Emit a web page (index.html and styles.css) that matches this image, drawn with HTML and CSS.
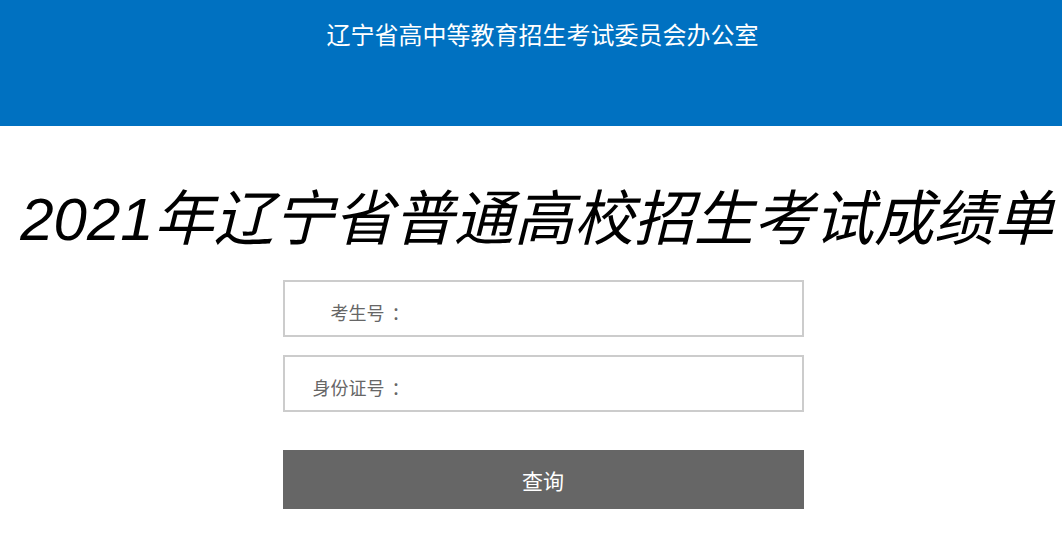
FILE: index.html
```html
<!DOCTYPE html>
<html lang="zh-CN">
<head>
  <meta charset="UTF-8" />
  <title>2021年辽宁省普通高校招生考试成绩单</title>
  <link rel="stylesheet" href="styles.css">
</head>
<body>

<div class="header">
  <p class="header-title">辽宁省高中等教育招生考试委员会办公室</p>
</div>

<h1 class="main-title">2021年辽宁省普通高校招生考试成绩单</h1>

<!-- 查询表单 -->
<div class="content">
  <form class="query-form" onsubmit="return false;">
    <div class="field">
      <label class="field-label" for="ksh">考生号<span class="colon">：</span></label>
      <input class="field-input" id="ksh" type="text" />
    </div>
    <div class="field">
      <label class="field-label" for="sfzh">身份证号<span class="colon">：</span></label>
      <input class="field-input" id="sfzh" type="text" />
    </div>
    <button class="query-btn" type="submit">查询</button>
  </form>
</div>

</body>
</html>
```

FILE: styles.css
```css
html, body {
  margin: 0;
  padding: 0;
  background: #fff;
  font-family: "Liberation Sans", "Noto Sans CJK SC", sans-serif;
}
.header {
  height: 126px;
  background: #0071c1;
}
.header-title {
  margin: 0;
  padding: 21px 0 0 23px;
  text-align: center;
  color: #fff;
  font-size: 24px;
  line-height: 30px;
}
.main-title {
  margin: 56px 0 0;
  padding-left: 12px;
  text-align: center;
  font-size: 60px;
  font-weight: normal;
  font-style: italic;
  line-height: 76px;
  color: #000;
  white-space: nowrap;
}
.content {
  padding-left: 24px;
}
.query-form {
  width: 521px;
  margin: 22px auto 0;
}
.field {
  box-sizing: border-box;
  display: flex;
  align-items: center;
  height: 57px;
  border: 2px solid #ccc;
  margin-bottom: 18px;
  padding-top: 6px;
}
.field-label {
  width: 125px;
  text-align: right;
  font-size: 18px;
  color: #666;
  flex-shrink: 0;
}
.colon {
  margin-left: 7px;
}
.field-input {
  flex: 1;
  border: none;
  outline: none;
  height: 40px;
  font-size: 18px;
}
.query-btn {
  display: block;
  width: 521px;
  height: 59px;
  margin-top: 38px;
  border: none;
  background: #666;
  color: #fff;
  font-size: 21px;
  font-family: "Liberation Sans", "Noto Sans CJK SC", sans-serif;
  cursor: pointer;
  padding: 0;
}
```
